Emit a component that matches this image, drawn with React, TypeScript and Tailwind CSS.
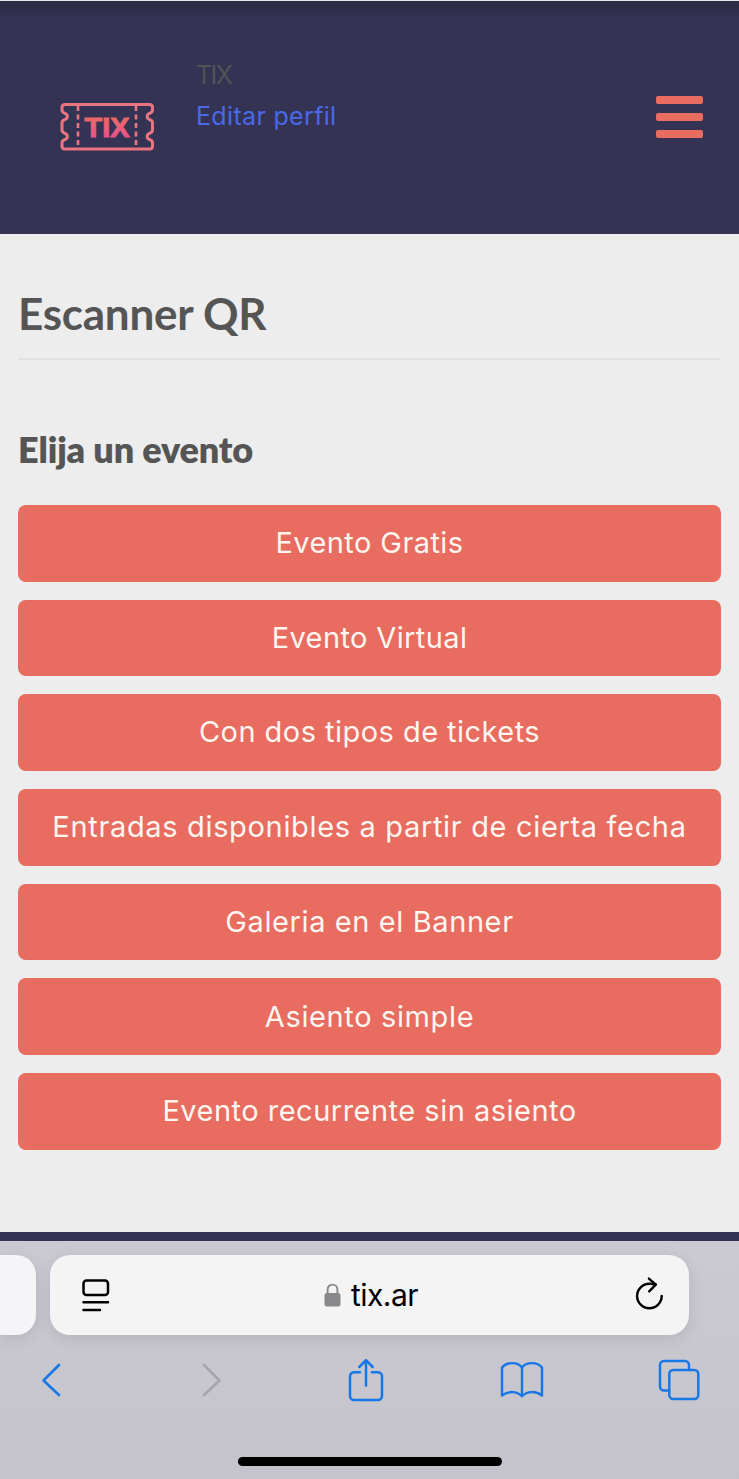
type EventItem = {
  name: string;
  tracking: string;
};

const EVENTS: EventItem[] = [
  { name: "Evento Gratis", tracking: "tracking-[0.42px]" },
  { name: "Evento Virtual", tracking: "tracking-[0.38px]" },
  { name: "Con dos tipos de tickets", tracking: "tracking-[0.46px]" },
  {
    name: "Entradas disponibles a partir de cierta fecha",
    tracking: "tracking-[0.66px]",
  },
  { name: "Galeria en el Banner", tracking: "tracking-[0.6px]" },
  { name: "Asiento simple", tracking: "tracking-[0.63px]" },
  { name: "Evento recurrente sin asiento", tracking: "tracking-[0.49px]" },
];

function TicketLogo() {
  return (
    <svg width="96" height="52" viewBox="0 0 96 52" fill="none">
      <defs>
        <linearGradient id="tix" x1="0" y1="0" x2="0" y2="1">
          <stop offset="0.15" stopColor="#ea6a62" />
          <stop offset="0.85" stopColor="#e8528f" />
        </linearGradient>
      </defs>
      <path
        d="M6 4.500H90.500Q93.500 4.500 93.500 7.500V10Q93.500 12 91.500 12.800C87 14.500 87 18.500 91.500 20Q93.500 20.800 93.500 23V30Q93.500 32 91.500 32.800C87 34.500 87 38.500 91.500 40Q93.500 40.800 93.500 43V46Q93.500 49 90.500 49H6Q3 49 3 46V43Q3 40.800 5 40C9.500 38.500 9.500 34.500 5 32.800Q3 32 3 30V23Q3 20.800 5 20C9.500 18.500 9.500 14.500 5 12.800Q3 12 3 10V7.500Q3 4.500 6 4.500Z"
        stroke="#e97580"
        strokeWidth="3"
      />
      <path
        d="M19 6V48M77 6V48"
        stroke="#e97580"
        strokeWidth="2.600"
        strokeDasharray="5 3.500"
      />
      <text
        x="25.500"
        y="37"
        textLength="45"
        lengthAdjust="spacingAndGlyphs"
        fill="url(#tix)"
        stroke="url(#tix)"
        strokeWidth="1"
        fontFamily="Liberation Sans, sans-serif"
        fontSize="28"
        fontWeight="700"
      >
        TIX
      </text>
    </svg>
  );
}

function PageIcon() {
  return (
    <svg width="28" height="34" viewBox="0 0 28 34" fill="none" stroke="#000" strokeWidth="2.500" strokeLinecap="round">
      <rect x="1.500" y="2.500" width="24.500" height="14.500" rx="3" />
      <path d="M1.500 24.300H26M1.500 32H18" />
    </svg>
  );
}

function LockIcon() {
  return (
    <svg width="17" height="24" viewBox="0 0 17 24" fill="none">
      <path d="M3.600 11V6.500a4.900 4.900 0 0 1 9.800 0V11" stroke="#88888a" strokeWidth="1.900" />
      <rect x="0.500" y="10" width="16" height="13.500" rx="2.500" fill="#88888a" />
    </svg>
  );
}

function ReloadIcon() {
  return (
    <svg width="28" height="34" viewBox="0 0 28 34" fill="none" stroke="#000" strokeWidth="2.400" strokeLinecap="round" strokeLinejoin="round" className="overflow-visible">
      <path d="M26.700 18A12.300 12.300 0 1 1 14.400 5.700C16.600 5.700 18.600 5.900 20.600 6.500" />
      <path d="M13.900 0.600L20.800 6.600L14.200 13.400" />
    </svg>
  );
}

function ShareIcon() {
  return (
    <svg width="36" height="44" viewBox="0 0 36 44" fill="none" stroke="#1677e5" strokeWidth="2.500" strokeLinecap="round" strokeLinejoin="round">
      <path d="M12 14.300H6a4 4 0 0 0-4 4V38a4 4 0 0 0 4 4H30a4 4 0 0 0 4-4V18.300a4 4 0 0 0-4-4H24" />
      <path d="M18 27.500V2.500M11.300 9L18 2.200L24.700 9" />
    </svg>
  );
}

function BookIcon() {
  return (
    <svg width="44" height="38" viewBox="0 0 44 38" fill="none" stroke="#1677e5" strokeWidth="2.400" strokeLinejoin="round">
      <path d="M22 6.500C18 .6 6.500.6 2 6.500V34.500C8 29.800 17 29.800 22 35.300C27 29.800 36 29.800 42 34.500V6.500C37.500.6 26 .6 22 6.500ZM22 6.500V35.300" />
    </svg>
  );
}

function TabsIcon() {
  return (
    <svg width="42" height="42" viewBox="0 0 42 42" fill="none" stroke="#1677e5" strokeWidth="2.500">
      <path d="M11 31.500H6a4 4 0 0 1-4-4V6a4 4 0 0 1 4-4H27a4 4 0 0 1 4 4V11" />
      <rect x="11.300" y="11" width="29" height="29" rx="4" />
    </svg>
  );
}

function Header() {
  return (
    <header className="flex h-[234px] shrink-0 items-start border-t border-[#e8e8ea] bg-linear-to-b from-[#2a2a40] to-[#353353] to-[16px] pr-9 pl-[59px]">
      <div className="pt-[99px]">
        <TicketLogo />
      </div>
      <div className="ml-[41px] pt-[54px] text-[25px] leading-[41px]">
        <p className="tracking-[-1.6px] text-[#525257]">TIX</p>
        <a href="#" className="block tracking-[0.33px] text-[#4969e8]">
          Editar perfil
        </a>
      </div>
      <button type="button" aria-label="Menu" className="mt-[95px] ml-auto flex flex-col gap-[9px]">
        <span className="h-2 w-[47px] rounded-[2px] bg-[#e86c60]" />
        <span className="h-2 w-[47px] rounded-[2px] bg-[#e86c60]" />
        <span className="h-2 w-[47px] rounded-[2px] bg-[#e86c60]" />
      </button>
    </header>
  );
}

function BrowserBar() {
  return (
    <footer className="flex h-[238px] shrink-0 flex-col bg-linear-to-b from-[#cbcad3] to-[#c5c4cd] pt-[14px]">
      <div className="flex h-20 gap-[14px]">
        <div className="w-9 rounded-r-[20px] bg-[#f5f5f7] shadow-[0_4px_16px_rgba(0,0,0,0.1)]" />
        <div className="flex w-[639px] items-center justify-between rounded-[20px] bg-[#f4f4f5] pr-[26px] pl-8 shadow-[0_4px_16px_rgba(0,0,0,0.1)]">
          <PageIcon />
          <div className="mr-[3px] flex items-center gap-[10px] text-[30px] tracking-[-0.5px] text-black">
            <LockIcon />
            <span>tix.ar</span>
          </div>
          <ReloadIcon />
        </div>
      </div>
      <nav className="mt-[22px] flex h-[46px] items-center pl-[41px]">
        <svg width="21" height="34" viewBox="0 0 21 34" fill="none" stroke="#1677e5" strokeWidth="2.600" strokeLinecap="round" strokeLinejoin="round">
          <path d="M18 2L2.500 17.500L18 32" />
        </svg>
        <svg width="21" height="34" viewBox="0 0 21 34" fill="none" stroke="#a5a5ae" strokeWidth="2.600" strokeLinecap="round" strokeLinejoin="round" className="ml-[139px]">
          <path d="M3 2L18.500 17.500L3 32" />
        </svg>
        <div className="ml-[126px]">
          <ShareIcon />
        </div>
        <div className="ml-[116px]">
          <BookIcon />
        </div>
        <div className="ml-[114px]">
          <TabsIcon />
        </div>
      </nav>
      <div className="mx-auto mt-[54px] h-[9px] w-[264px] rounded-full bg-black" />
    </footer>
  );
}

export default function App() {
  return (
    <div className="flex h-[1479px] w-[739px] flex-col overflow-hidden bg-[#ededed] font-['Inter',sans-serif]">
      <Header />
      <main className="flex h-[998px] shrink-0 flex-col px-[18px] text-[#555]">
        <h1 className="flex h-[126px] items-end border-b-2 border-[#e2e2e2] pb-[15px] font-['Lato',sans-serif] text-[44px] leading-[60px] font-bold tracking-[-0.25px]">
          Escanner QR
        </h1>
        <h2 className="mt-16 font-['Lato',sans-serif] text-[36px] leading-[50px] font-extrabold tracking-[-0.15px]">
          Elija un evento
        </h2>
        <div className="mt-[31px] flex flex-col gap-[18px]">
          {EVENTS.map((event) => (
            <button
              key={event.name}
              type="button"
              className={`h-[76.7px] rounded-lg bg-[#e86c60] pb-px text-[29px] whitespace-nowrap text-[#fff6f0] ${event.tracking}`}
            >
              {event.name}
            </button>
          ))}
        </div>
      </main>
      <div className="h-[9px] shrink-0 bg-[#353353]" />
      <BrowserBar />
    </div>
  );
}
